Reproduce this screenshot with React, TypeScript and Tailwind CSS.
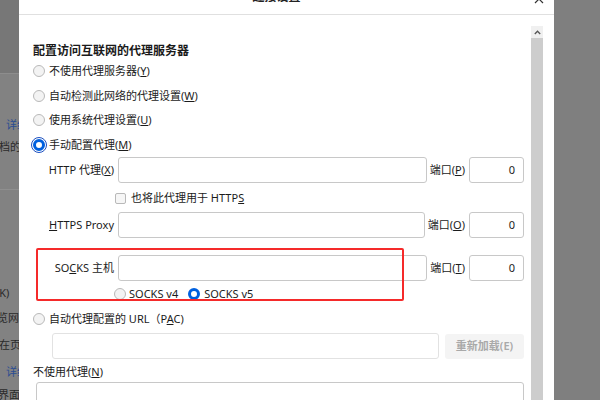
import React from "react";

const font = "font-['Noto_Sans','Noto_Sans_CJK_SC',sans-serif]";

const Radio: React.FC<{ checked?: boolean; focus?: boolean }> = ({ checked, focus }) => {
  if (checked) {
    return (
      <span
        className={
          "block w-[12px] h-[12px] rounded-full border-[3px] border-[#0060df] bg-white shrink-0" +
          (focus ? " outline-[1.5px] outline-offset-[1px] outline-[#1c4fbf]" : "")
        }
      />
    );
  }
  return <span className="block w-[12px] h-[12px] rounded-full border border-[#b9b9b9] bg-[#f3f3f3] shrink-0" />;
};

const RadioRow: React.FC<{ checked?: boolean; focus?: boolean; className?: string; children: React.ReactNode }> = ({
  checked,
  focus,
  className = "",
  children,
}) => (
  <div className={`flex items-center h-[24px] gap-[4px] ${className}`}>
    <Radio checked={checked} focus={focus} />
    <span>{children}</span>
  </div>
);

const ProxyRow: React.FC<{ label: React.ReactNode; port: React.ReactNode }> = ({ label, port }) => (
  <div className="flex items-center h-[26px]">
    <div className="w-[85px] pr-[4px] text-right whitespace-nowrap">{label}</div>
    <div className="flex-1 h-[26px] rounded-[3px] border border-[#c8c8c8] bg-white" />
    <div className="ml-[3px] mr-[4px] whitespace-nowrap">{port}</div>
    <div className="w-[55px] h-[26px] rounded-[3px] border border-[#c8c8c8] bg-white flex items-center justify-end pr-[8px]">
      0
    </div>
  </div>
);

const LeftStrip: React.FC = () => (
  <div className="w-[19px] shrink-0 flex flex-col overflow-hidden text-[11px] leading-[14px] text-[#2a2a2a] whitespace-nowrap">
    <div className="h-[73px] shrink-0 bg-[#777777]" />
    <div className="h-[1px] shrink-0 bg-[#8d8d8d]" />
    <div className="flex-1 bg-[#828282] flex flex-col">
      <div className="mt-[44px] ml-[6px] text-[#2b4d92]">详细信息</div>
      <div className="mt-[8px] -ml-[12px]">文档的设置</div>
      <div className="mt-[35px] h-[1px] shrink-0 bg-[#8f8f8f]" />
      <div className="mt-[96px] -ml-[4px]">(K)</div>
      <div className="mt-[11px] -ml-[3px]">览网页</div>
      <div className="mt-[13px] -ml-[1px]">在页面</div>
      <div className="mt-[13px] ml-[6px] text-[#2b4d92]">详细信息</div>
      <div className="mt-[9px] -ml-[2px]">界面操作</div>
    </div>
  </div>
);

export default function App() {
  return (
    <div className={`w-[600px] h-[400px] flex overflow-hidden bg-[#7f7f7f] ${font} text-[11px] text-[#1b1b1b]`}>
      <LeftStrip />

      <div className="w-[535px] shrink-0 bg-white flex flex-col overflow-hidden">
        {/* title bar, cut by the top of the picture */}
        <div className="relative h-[15px] shrink-0 border-b border-[#e0e0e0] overflow-hidden flex justify-center pr-[20px]">
          <span className="-mt-[11px] leading-[16px] text-[12px] font-bold text-[#222]">连接设置</span>
          <svg
            className="absolute left-[515px] -top-[6px]"
            width="10"
            height="10"
            viewBox="0 0 10 10"
            fill="none"
            stroke="#333"
            strokeWidth="1.2"
          >
            <path d="M1 1 L9 9 M9 1 L1 9" />
          </svg>
        </div>

        <div className="flex-1 min-h-0 flex pt-[11px]">
          <div className="flex-1 pl-[14px] pr-[7px] -mt-[11px] pt-[27px] leading-[16px]">
            <div className="h-[17px] flex items-center text-[12px] font-bold text-[#1a1a1a]">
              配置访问互联网的代理服务器
            </div>
            <RadioRow>
              不使用代理服务器(<u>Y</u>)
            </RadioRow>
            <RadioRow className="mt-[1px]">
              自动检测此网络的代理设置(<u>W</u>)
            </RadioRow>
            <RadioRow>
              使用系统代理设置(<u>U</u>)
            </RadioRow>
            <RadioRow checked focus className="mt-[1px]">
              手动配置代理(<u>M</u>)
            </RadioRow>

            <ProxyRow
              label={
                <>
                  HTTP 代理(<u>X</u>)
                </>
              }
              port={
                <>
                  端口(<u>P</u>)
                </>
              }
            />

            <div className="mt-[3px] h-[24px] flex items-center pl-[82px] gap-[5px]">
              <span className="block w-[11px] h-[11px] rounded-[2px] border border-[#b9b9b9] bg-[#f6f6f6]" />
              <span>
                也将此代理用于 HTTP<u>S</u>
              </span>
            </div>

            <div className="mt-[2px]">
              <ProxyRow
                label={
                  <>
                    <u>H</u>TTPS Proxy
                  </>
                }
                port={
                  <>
                    端口(<u>O</u>)
                  </>
                }
              />
            </div>

            <div className="relative mt-[10px] pt-[7px]">
              <ProxyRow
                label={
                  <>
                    SO<u>C</u>KS 主机
                  </>
                }
                port={
                  <>
                    端口(<u>T</u>)
                  </>
                }
              />
              <div className="mt-[1px] h-[24px] flex items-center pl-[81px]">
                <Radio />
                <span className="ml-[3px]">SOCKS v4</span>
                <span className="ml-[10px]">
                  <Radio checked />
                </span>
                <span className="ml-[4px]">SOCKS v5</span>
              </div>
              <div className="absolute left-[3px] top-0 w-[368px] h-[53px] border-2 border-[#f52a2a] rounded-[2px] pointer-events-none" />
            </div>

            <RadioRow className="mt-[1px]">
              自动代理配置的 URL（P<u>A</u>C)
            </RadioRow>

            <div className="mt-[2px] flex items-center h-[26px]">
              <div className="ml-[19px] w-[387px] h-[26px] rounded-[3px] border border-[#e2e2e2] bg-white" />
              <div className="ml-[6px] flex-1 h-[25px] rounded-[3px] bg-[#f4f4f4] flex items-center justify-center text-[#a9a9a9] font-semibold">
                重新加载(E)
              </div>
            </div>

            <div className="mt-[3px] h-[20px] flex items-center">
              不使用代理(<u>N</u>)
            </div>
            <div className="ml-[3px] h-[40px] rounded-[3px] border border-[#c8c8c8] bg-white" />
          </div>

          {/* scrollbar */}
          <div className="w-[12px] shrink-0 flex flex-col">
            <div className="h-[12px] shrink-0 bg-[#f0f0f0] flex items-center justify-center">
              <svg width="7" height="5" viewBox="0 0 7 5" fill="none" stroke="#555" strokeWidth="1.3">
                <path d="M0.8 4 L3.5 1.2 L6.2 4" />
              </svg>
            </div>
            <div className="flex-1 bg-[#cdcdcd]" />
          </div>
          <div className="w-[11px] shrink-0" />
        </div>
      </div>

      <div className="flex-1 bg-[#7f7f7f]" />
    </div>
  );
}
